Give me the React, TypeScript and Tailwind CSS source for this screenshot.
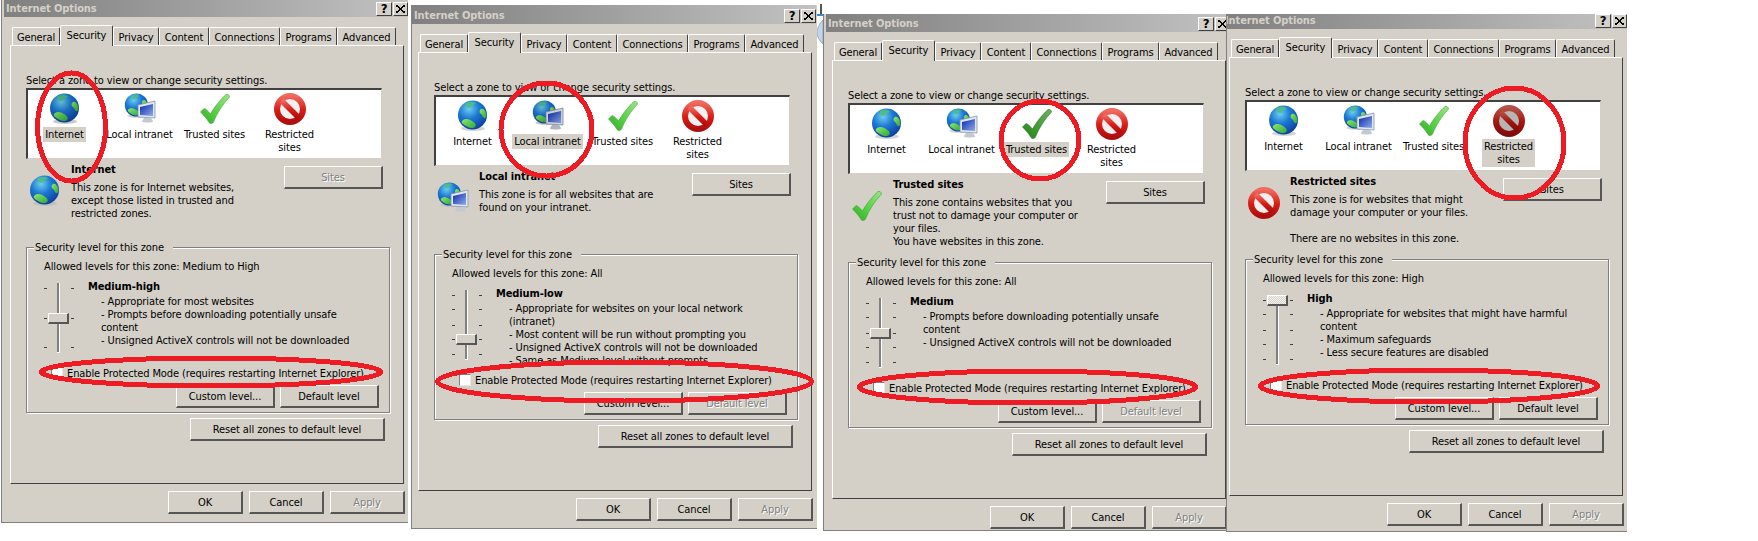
import React from 'react';

type IconKind = 'globe' | 'intranet' | 'check' | 'blocked';

interface DialogData {
  frame: string;
  inner: string;
  selected: number;
  icon: IconKind;
  heading: string;
  desc: string[];
  sitesDisabled: boolean;
  allowed: string;
  level: string;
  lines: string[];
  ticks: number[];
  thumb: number;
  defaultDisabled: boolean;
}

const dialogs: DialogData[] = [
  {
    frame: 'left-[1px] top-0 w-[407px] h-[523px]',
    inner: '-mt-[2px] ml-0',
    selected: 0,
    icon: 'globe',
    heading: 'Internet',
    desc: ['This zone is for Internet websites,', 'except those listed in trusted and', 'restricted zones.'],
    sitesDisabled: true,
    allowed: 'Medium to High',
    level: 'Medium-high',
    lines: ['- Appropriate for most websites', '- Prompts before downloading potentially unsafe', 'content', '- Unsigned ActiveX controls will not be downloaded'],
    ticks: [5, 35, 64],
    thumb: 35,
    defaultDisabled: false,
  },
  {
    frame: 'left-[411px] top-[5px] w-[406px] h-[524px]',
    inner: 'mt-0 -ml-[2px]',
    selected: 1,
    icon: 'intranet',
    heading: 'Local intranet',
    desc: ['This zone is for all websites that are', 'found on your intranet.'],
    sitesDisabled: false,
    allowed: 'All',
    level: 'Medium-low',
    lines: ['- Appropriate for websites on your local network', '(intranet)', '- Most content will be run without prompting you', '- Unsigned ActiveX controls will not be downloaded', '- Same as Medium level without prompts'],
    ticks: [5, 19, 35, 49, 64],
    thumb: 49,
    defaultDisabled: true,
  },
  {
    frame: 'left-[823px] top-[14px] w-[403px] h-[517px]',
    inner: '-mt-[1px] ml-0',
    selected: 2,
    icon: 'check',
    heading: 'Trusted sites',
    desc: ['This zone contains websites that you', 'trust not to damage your computer or', 'your files.', 'You have websites in this zone.'],
    sitesDisabled: false,
    allowed: 'All',
    level: 'Medium',
    lines: ['- Prompts before downloading potentially unsafe', 'content', '- Unsigned ActiveX controls will not be downloaded'],
    ticks: [5, 19, 35, 49, 64],
    thumb: 35,
    defaultDisabled: true,
  },
  {
    frame: 'left-[1226px] top-[14px] w-[401px] h-[518px]',
    inner: '-mt-[4px] -ml-[6px]',
    selected: 3,
    icon: 'blocked',
    heading: 'Restricted sites',
    desc: ['This zone is for websites that might', 'damage your computer or your files.', '', 'There are no websites in this zone.'],
    sitesDisabled: false,
    allowed: 'High',
    level: 'High',
    lines: ['- Appropriate for websites that might have harmful', 'content', '- Maximum safeguards', '- Less secure features are disabled'],
    ticks: [5, 19, 35, 49, 64],
    thumb: 5,
    defaultDisabled: false,
  },
];

const tabs = [
  { name: 'General', w: 'w-[48px]' },
  { name: 'Security', w: 'w-[53px]' },
  { name: 'Privacy', w: 'w-[46px]' },
  { name: 'Content', w: 'w-[50px]' },
  { name: 'Connections', w: 'w-[71px]' },
  { name: 'Programs', w: 'w-[57px]' },
  { name: 'Advanced', w: 'w-[59px]' },
];

const zones: { name: string[]; icon: IconKind }[] = [
  { name: ['Internet'], icon: 'globe' },
  { name: ['Local intranet'], icon: 'intranet' },
  { name: ['Trusted sites'], icon: 'check' },
  { name: ['Restricted', 'sites'], icon: 'blocked' },
];

function SharedDefs() {
  return (
    <svg className="absolute w-0 h-0">
      <defs>
        <radialGradient id="sea" cx="38%" cy="28%" r="78%">
          <stop offset="0%" stopColor="#6fd0ee" />
          <stop offset="45%" stopColor="#1c78d4" />
          <stop offset="100%" stopColor="#0d3a9a" />
        </radialGradient>
        <linearGradient id="leaf" x1="0" y1="0" x2="1" y2="1">
          <stop offset="0%" stopColor="#8ce868" />
          <stop offset="100%" stopColor="#2fa83a" />
        </linearGradient>
        <linearGradient id="tick" x1="1" y1="0" x2="0" y2="1">
          <stop offset="0%" stopColor="#9be486" />
          <stop offset="60%" stopColor="#52cc40" />
          <stop offset="100%" stopColor="#34a82f" />
        </linearGradient>
        <linearGradient id="stop" x1="0" y1="0" x2="0" y2="1">
          <stop offset="0%" stopColor="#f06a5e" />
          <stop offset="55%" stopColor="#d81c14" />
          <stop offset="100%" stopColor="#ae0e0e" />
        </linearGradient>
        <linearGradient id="screen" x1="0" y1="0" x2="1" y2="1">
          <stop offset="0%" stopColor="#0a2aa8" />
          <stop offset="100%" stopColor="#8fabec" />
        </linearGradient>
      </defs>
    </svg>
  );
}

function Globe() {
  return (
    <>
      <ellipse cx="16" cy="28.500" rx="12" ry="2.500" fill="#b8b8b8" opacity="0.6" />
      <circle cx="15.500" cy="15" r="14.500" fill="url(#sea)" />
      <path d="M5 21c3-3 7-2 10 0s5 4 3 6-6 1-9-1-5-3-4-5z" fill="url(#leaf)" />
      <path d="M24 9c2-1 4 1 5 4s0 6-2 5-1-3-3-4-2-4 0-5z" fill="url(#leaf)" />
      <path d="M9 3c3-1.500 8-1.500 10 0-1 2-4 2-5 4s-3 1-4 0-2-3-1-4z" fill="#4cc07a" opacity="0.85" />
    </>
  );
}

function ZoneIcon({ kind, dim }: { kind: IconKind; dim?: boolean }) {
  const tone = !dim ? '' : kind === 'globe' || kind === 'intranet' ? 'brightness-90' : 'brightness-75';
  return (
    <svg viewBox="0 0 32 32" className={`w-8 h-8 ${tone}`}>
      {kind === 'globe' && <Globe />}
      {kind === 'intranet' && (
        <>
          <g transform="scale(0.8)"><Globe /></g>
          <path d="M14 12l17-4v17l-17-1z" fill="#dfe6f4" stroke="#8a94aa" strokeWidth="0.8" />
          <path d="M16 14l13-3v12l-13-1z" fill="url(#screen)" />
          <path d="M20 25h7l2 3c1 2-12 2-11 0z" fill="#c4c8d0" />
        </>
      )}
      {kind === 'check' && (
        <path d="M1.500 19L5 15.500c2 .5 4.500 3 6.500 5.500C16 13 22 6 27 1.500c1.500-.5 3.500.5 3.500 2.500C24 11 18 20 14.500 29c-1 2-3.500 2-4.500.5C8 26 4.500 22 1.500 19z" fill="url(#tick)" stroke="#3aa82e" strokeWidth="0.6" />
      )}
      {kind === 'blocked' && (
        <>
          <circle cx="16" cy="16" r="13" fill="#f4f0f0" stroke="url(#stop)" strokeWidth="6" />
          <path d="M7.500 7.500l17 17" stroke="url(#stop)" strokeWidth="5.500" />
        </>
      )}
    </svg>
  );
}

function Win2kButton({ label, disabled, className }: { label: string; disabled?: boolean; className: string }) {
  return (
    <div
      className={`flex items-center justify-center bg-[#d4d0c8] border-t border-l border-t-white border-l-white border-r-2 border-b-2 border-r-[#565656] border-b-[#565656] ${className} ${
        disabled ? 'text-[#808080] [text-shadow:1px_1px_0_#fff]' : 'text-black'
      }`}
    >
      {label}
    </div>
  );
}

function Slider({ ticks, thumb, focused }: { ticks: number[]; thumb: number; focused: boolean }) {
  return (
    <div className="relative w-[32px] h-[70px] shrink-0">
      <div className="absolute left-[13px] top-0 w-[3px] h-[70px] bg-[#808080] border-r border-b border-white" />
      {ticks.map((t) => (
        <div key={t} className="flex justify-between absolute left-0 w-[30px]" style={{ top: t }}>
          <div className="w-[3px] h-px bg-[#404040]" />
          <div className="w-[3px] h-px bg-[#404040]" />
        </div>
      ))}
      <div
        className={`absolute left-[4px] w-[21px] h-[11px] border-t border-l border-white border-r-2 border-b-2 border-r-[#565656] border-b-[#565656] ${
          focused ? 'bg-[repeating-conic-gradient(#d4d0c8_0_25%,#f4f4f0_0_50%)] bg-[length:2px_2px]' : 'bg-[#d4d0c8]'
        }`}
        style={{ top: thumb - 5 }}
      />
    </div>
  );
}

function CaptionButton({ className, children }: { className: string; children: React.ReactNode }) {
  return (
    <div className={`flex items-center justify-center h-[14px] font-bold text-[13px] bg-[#d4d0c8] border-t border-l border-white border-r border-b border-r-[#404040] border-b-[#404040] ${className}`}>
      {children}
    </div>
  );
}

function Dialog({ d }: { d: DialogData }) {
  return (
    <div className={`absolute overflow-hidden bg-[#d4d0c8] border-l border-b border-[#808080] ${d.frame}`}>
      <div className={`w-[407px] ${d.inner}`}>
        {/* title bar */}
        <div className="ml-[2px] w-[404px] h-[19px] flex items-center justify-between pt-[2px] pl-[2px] bg-gradient-to-r from-[#808080] to-[#c2c2c2]">
          <span className="font-bold text-[#d4d0c8]">Internet Options</span>
          <div className="flex gap-px">
            <CaptionButton className="w-[16px]">?</CaptionButton>
            <CaptionButton className="w-[15px]">
              <svg viewBox="0 0 9 8" className="w-[9px] h-[8px]" stroke="#000" strokeWidth="1.600" shapeRendering="crispEdges">
                <path d="M0 0l9 8M9 0L0 8" />
              </svg>
            </CaptionButton>
          </div>
        </div>

        {/* tab strip */}
        <div className="flex items-end mt-[8px] ml-[10px] relative z-10 h-[20px]">
          {tabs.map((t) =>
            t.name === 'Security' ? (
              <div key={t.name} className={`${t.w} -mb-px h-[21px] pt-[3px] text-center bg-[#d4d0c8] border-t border-l border-white border-r border-r-[#404040] rounded-t-[2px]`}>
                {t.name}
              </div>
            ) : (
              <div key={t.name} className={`${t.w} h-[18px] pt-[3px] text-center bg-[#d4d0c8] border-t border-l border-white border-r border-r-[#404040] rounded-t-[2px]`}>
                {t.name}
              </div>
            ),
          )}
        </div>

        {/* panel */}
        <div className="ml-[8px] w-[394px] h-[439px] pt-[28px] pl-[15px] border-t border-l border-white border-r border-b border-r-[#404040] border-b-[#404040]">
          <div className="h-[13px] mb-px">Select a zone to view or change security settings.</div>

          <div className="grid grid-cols-[75px_75px_75px_75px] w-[356px] h-[71px] pt-[3px] bg-white border-t-2 border-l-2 border-t-[#404040] border-l-[#404040] border-r border-b border-r-[#d4d0c8] border-b-[#d4d0c8]">
            {zones.map((z, i) => (
              <div key={z.name[0]} className="flex flex-col items-center -ml-[2px]">
                <ZoneIcon kind={z.icon} dim={i === d.selected} />
                <div className={`mt-[2px] px-[2px] pt-px pb-px text-center ${i === d.selected ? 'bg-[#d4d0c8]' : ''}`}>
                  {z.name.map((n) => <div key={n}>{n}</div>)}
                </div>
              </div>
            ))}
          </div>

          {/* zone description */}
          <div className="flex h-[82px] mt-[2px]">
            <div className="w-[45px] pl-[3px] pt-[14px]">
              <ZoneIcon kind={d.icon} />
            </div>
            <div className="w-[213px] pt-[2px]">
              <div className="font-bold">{d.heading}</div>
              <div className="mt-[5px]">
                {d.desc.map((l, i) => <div key={i} className="h-[13px]">{l}</div>)}
              </div>
            </div>
            <Win2kButton label="Sites" disabled={d.sitesDisabled} className="w-[99px] h-[23px] mt-[5px]" />
          </div>

          {/* security level group */}
          <div className="relative w-[364px] h-[166px] mt-[4px] pl-[17px] pt-[12px] border border-[#808080] shadow-[inset_1px_1px_0_#fff,1px_1px_0_#fff]">
            <div className="absolute left-[7px] -top-[7px] px-px pr-[9px] bg-[#d4d0c8]">Security level for this zone</div>
            <div className="h-[13px]">Allowed levels for this zone: {d.allowed}</div>
            <div className="flex mt-[10px] h-[78px]">
              <Slider ticks={d.ticks} thumb={d.thumb} focused={d.selected === 3} />
              <div className="ml-[12px] -mt-[3px] overflow-hidden">
                <div className="font-bold">{d.level}</div>
                <div className="mt-[2px] pl-[13px]">
                  {d.lines.map((l) => <div key={l} className="h-[13px] whitespace-nowrap">{l}</div>)}
                </div>
              </div>
            </div>
            <div className="flex items-center h-[14px] mt-[5px] ml-[7px]">
              <div className="w-[12px] h-[12px] bg-white border-t border-l border-[#808080] border-r border-b border-r-[#e8e8e8] border-b-[#e8e8e8]" />
              <span className="ml-[4px] whitespace-nowrap">Enable Protected Mode (requires restarting Internet Explorer)</span>
            </div>
            <div className="flex justify-end gap-[5px] mt-[5px] pr-[10px]">
              <Win2kButton label="Custom level..." className="w-[99px] h-[23px]" />
              <Win2kButton label="Default level" disabled={d.defaultDisabled} className="w-[99px] h-[23px]" />
            </div>
          </div>

          <Win2kButton label="Reset all zones to default level" className="w-[195px] h-[23px] mt-[5px] ml-[164px]" />
        </div>

        {/* footer buttons */}
        <div className="flex gap-[6px] mt-[7px] ml-[166px]">
          <Win2kButton label="OK" className="w-[75px] h-[23px]" />
          <Win2kButton label="Cancel" className="w-[75px] h-[23px]" />
          <Win2kButton label="Apply" disabled className="w-[75px] h-[23px]" />
        </div>
      </div>
    </div>
  );
}

export default function App() {
  return (
    <div className="relative w-[1758px] h-[541px] bg-white overflow-hidden font-['DejaVu_Sans_Condensed','DejaVu_Sans',sans-serif] text-[11px] leading-[13px] tracking-[-0.11px] text-black">
      <SharedDefs />
      {dialogs.map((d) => <Dialog key={d.heading} d={d} />)}
      {/* leftover bits of the desktop between the shots */}
      <svg className="absolute left-[817px] top-0 w-[6px] h-[50px]">
        <rect x="3" y="4" width="2" height="10" fill="#555555" />
        <rect x="0" y="14" width="6" height="2" fill="#3a8ad0" />
        <path d="M6 20C2 24 0 29 0 33s3 8 6 11z" fill="#c4d4e8" stroke="#8a9ab0" strokeWidth="0.8" />
      </svg>
      {/* red marker circles painted over the shots */}
      <svg className="absolute inset-0 w-[1758px] h-[541px]" fill="none" stroke="#ed1c24" strokeWidth="5" shapeRendering="crispEdges">
        <ellipse cx="71.500" cy="127" rx="34" ry="54" />
        <ellipse cx="211" cy="372" rx="170" ry="14" />
        <ellipse cx="546.500" cy="129.500" rx="45.500" ry="46.500" />
        <ellipse cx="624.500" cy="381.500" rx="187" ry="19.500" />
        <ellipse cx="1040" cy="140" rx="39" ry="39" />
        <ellipse cx="1027.500" cy="387" rx="168.500" ry="16" />
        <ellipse cx="1514.500" cy="143" rx="49.500" ry="55" />
        <ellipse cx="1429" cy="386" rx="169" ry="16" />
      </svg>
    </div>
  );
}
